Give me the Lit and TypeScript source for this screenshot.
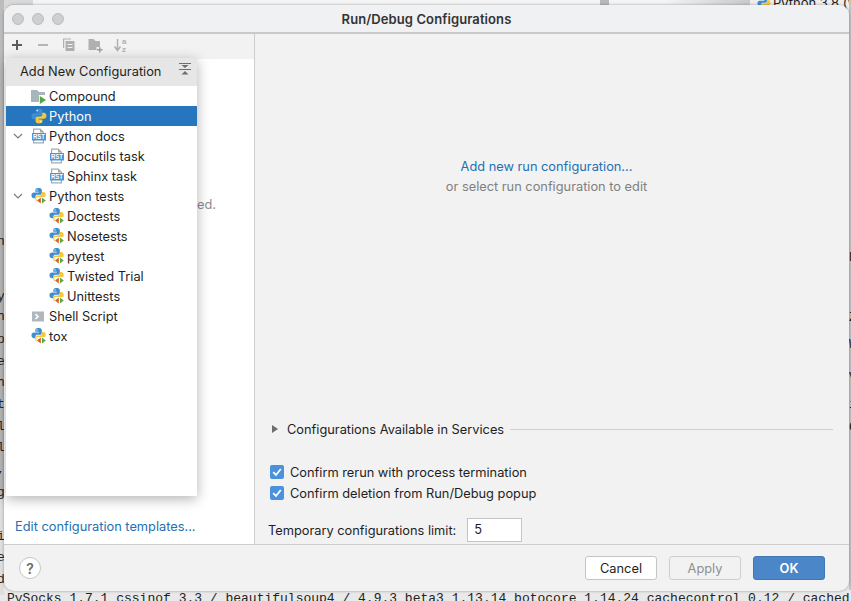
import { LitElement, css, html, svg } from 'lit';
import { customElement } from 'lit/decorators.js';

type Row = { label: string; icon: string; level: number; open?: boolean; selected?: boolean };

const rows: Row[] = [
  { label: 'Compound', icon: 'compound', level: 0 },
  { label: 'Python', icon: 'python', level: 0, selected: true },
  { label: 'Python docs', icon: 'rst', level: 0, open: true },
  { label: 'Docutils task', icon: 'rst', level: 1 },
  { label: 'Sphinx task', icon: 'rst', level: 1 },
  { label: 'Python tests', icon: 'tests', level: 0, open: true },
  { label: 'Doctests', icon: 'tests', level: 1 },
  { label: 'Nosetests', icon: 'tests', level: 1 },
  { label: 'pytest', icon: 'tests', level: 1 },
  { label: 'Twisted Trial', icon: 'tests', level: 1 },
  { label: 'Unittests', icon: 'tests', level: 1 },
  { label: 'Shell Script', icon: 'shell', level: 0 },
  { label: 'tox', icon: 'tests', level: 0 },
];

// letters of the terminal behind the dialog, cut off by its left edge
const leftChars: [string, number][] = [
  ['n', 242], ['y', 297], ['h', 317], ['p', 340], ['e', 362], ['h', 383], ['t', 405],
  ['l', 427], ['l', 448], [',', 470], ['g', 493], ['i', 537], ['e', 558], ['d', 580],
];
const rightChars: [string, number][] = [
  ['E', 258], ['Z', 318], ['W', 345], ['V', 378], ['i', 405], ['C', 428], ['-', 450], ['-', 472],
];

const half = 'M8 .5C5.2 .5 4.5 1.8 4.5 3V4.5H8.2V5.3H3.2C1.5 5.3 .5 6.4 .5 8.2 .5 10 1.5 11.3 3 11.3H4.7V9.4C4.7 8.2 5.6 7.6 6.6 7.6H9.4C10.6 7.6 11.4 6.8 11.4 5.7V3C11.4 1.6 10.4 .5 8 .5Z';
const snake = svg`
  <path fill="#3f8fd0" d=${half}/>
  <path fill="#f5c73d" d=${half} transform="rotate(180 8 8)"/>
  <circle cx="6.3" cy="2.5" r=".7" fill="#fff"/>
  <circle cx="9.7" cy="13.5" r=".7" fill="#fff"/>`;

function icon(name: string) {
  if (name === 'python') {
    return html`<svg width="16" height="16" viewBox="0 0 16 16">${snake}</svg>`;
  }
  if (name === 'tests') {
    return html`<svg width="16" height="16" viewBox="0 0 16 16">
      <g transform="translate(0 -.5) scale(.95)">${snake}</g>
      <path fill="#fff" d="M5.5 9h10v7.5h-10z"/>
      <path fill="#e0592a" d="M9.8 9.6V15.4L6 12.5Z"/>
      <path fill="#5fa83f" d="M11 9.6V15.4L14.8 12.5Z"/>
    </svg>`;
  }
  if (name === 'rst') {
    return html`<svg width="16" height="16" viewBox="0 0 16 16">
      <path fill="#a3abb0" d="M2 0.5H9.5L13 4V15.5H2Z"/>
      <path fill="#fff" d="M3.2 1.7H9V4.6H11.8V14.3H3.2Z"/>
      <rect x="1" y="5" width="14" height="7.5" fill="#4a97d6"/>
      <text x="2" y="11" textLength="12" lengthAdjust="spacingAndGlyphs" font-size="7" font-weight="700" font-family="Liberation Sans, sans-serif" fill="#fff">RST</text>
    </svg>`;
  }
  if (name === 'shell') {
    return html`<svg width="16" height="16" viewBox="0 0 16 16">
      <rect x="1" y="3.5" width="12" height="10" fill="#afb8bf"/>
      <path d="M4.5 6 7 8.5 4.5 11" fill="none" stroke="#fff" stroke-width="1.6"/>
    </svg>`;
  }
  return html`<svg width="16" height="16" viewBox="0 0 16 16">
    <path fill="#a9b4bb" d="M0 2H6L8 4H14V14H0Z"/>
    <path fill="#fff" d="M8 7H16V16H8Z"/>
    <path fill="#4fa83d" d="M8.8 8V16L15 12Z"/>
  </svg>`;
}

@customElement('app-root')
export class AppRoot extends LitElement {
  static styles = css`
    :host {
      display: block;
      position: relative;
      width: 851px;
      height: 601px;
      overflow: hidden;
      background: #e9e9e9;
      font-family: Inter, "Liberation Sans", sans-serif;
      font-size: 12.8px;
      color: #1e1e1e;
    }
    .strip {
      position: absolute;
      font-family: "Liberation Mono", monospace;
      font-size: 13px;
      line-height: 16px;
      color: #222;
      white-space: pre;
    }
    .top-a { left: 0; top: 0; width: 33px; height: 8px; background: #d9d9d9; }
    .top-b { left: 33px; top: 0; width: 567px; height: 8px; background: #f4f4f4; }
    .top-c { left: 600px; top: 0; width: 9px; height: 8px; background: #b9b9b9; }
    .top-d { left: 609px; top: 0; width: 141px; height: 8px; background: linear-gradient(90deg, #f4f4f4 40%, #c9c9c9); }
    .top-e {
      left: 750px; top: -4px; width: 101px; height: 14px;
      display: flex; gap: 2px; padding-left: 7px; box-sizing: border-box;
      background: #eee;
      font-family: Inter, sans-serif;
      font-size: 13px;
      line-height: 14px;
      overflow: hidden;
    }
    .top-e svg { flex: none; }
    .left {
      left: 0; top: 0; width: 4px; height: 595px; overflow: hidden;
      background: linear-gradient(#bcbcbc 497px, #dedede 497px);
    }
    .right { left: 849px; top: 0; width: 2px; height: 590px; background: #c2c2c2; overflow: hidden; }
    .char { position: absolute; line-height: 16px; }
    .left .char { left: -3px; }
    .right .char { left: 0; }
    .bottom { left: 7px; top: 591px; }

    .dialog {
      position: absolute;
      left: 4px;
      top: 5px;
      width: 845px;
      height: 586px;
      border-radius: 10px;
      overflow: hidden;
      background: #f2f2f2;
      box-shadow: 0 0 3px rgba(0, 0, 0, 0.35);
      display: flex;
      flex-direction: column;
    }
    .titlebar {
      height: 27px;
      flex: none;
      display: flex;
      align-items: center;
      justify-content: center;
      position: relative;
      background: #f0f1f3;
      border-bottom: 2px solid #c9c9c9;
      font-weight: 600;
      font-size: 13px;
      letter-spacing: 0.1px;
      color: #333;
    }
    .lights {
      position: absolute;
      left: 8px;
      top: 8px;
      display: flex;
      gap: 8px;
    }
    .lights i {
      display: block;
      width: 12px;
      height: 12px;
      box-sizing: border-box;
      border-radius: 50%;
      background: #cfcfcf;
      border: 1px solid #bcbcbc;
    }
    .main { flex: 1; display: flex; min-height: 0; }
    .side {
      width: 250px;
      flex: none;
      display: flex;
      flex-direction: column;
      border-right: 1px solid #cdcdcd;
    }
    .toolbar {
      height: 25px;
      flex: none;
      box-sizing: border-box;
      display: flex;
      align-items: center;
      gap: 10px;
      padding: 0 0 4px 5px;
    }
    .toolbar svg { display: block; }
    .list {
      flex: 1;
      background: #fff;
      display: flex;
      flex-direction: column;
      align-items: center;
      padding: 138px 3px 0 0;
      color: #8c8c8c;
    }
    .templates {
      height: 28px;
      flex: none;
      background: #fff;
      padding: 0 0 0 11px;
      color: #2470b3;
      line-height: 22px;
    }
    .content { flex: 1; display: flex; flex-direction: column; min-width: 0; }
    .hint {
      height: 385px;
      flex: none;
      display: flex;
      flex-direction: column;
      align-items: center;
      padding: 125px 11px 0 0;
      box-sizing: border-box;
      gap: 4px;
      line-height: 16px;
    }
    .link { color: #2470b3; }
    .muted { color: #808080; }
    .services {
      display: flex;
      align-items: center;
      height: 20px;
      padding: 0 16px 0 17px;
      gap: 6px;
    }
    .tri {
      width: 0;
      height: 0;
      margin-right: 3px;
      border-left: 6px solid #6e6e6e;
      border-top: 4.5px solid transparent;
      border-bottom: 4.5px solid transparent;
    }
    .services hr { flex: 1; margin: 0; border: 0; border-top: 1px solid #cfcfcf; }
    .checks { display: flex; flex-direction: column; gap: 5px; padding: 25px 0 0 15px; }
    .check { display: flex; align-items: center; gap: 6px; height: 16px; }
    .check svg { display: block; }
    .limit {
      display: flex;
      align-items: center;
      gap: 11px;
      padding: 17px 0 0 13px;
    }
    .limit .field {
      width: 55px;
      height: 24px;
      box-sizing: border-box;
      border: 1px solid #c4c4c4;
      background: #fff;
      padding-left: 6px;
      line-height: 22px;
    }
    .footer {
      height: 47px;
      flex: none;
      box-sizing: border-box;
      border-top: 1px solid #cdcdcd;
      display: flex;
      align-items: center;
      padding: 0 24px 0 15px;
      gap: 12px;
    }
    .help {
      width: 22px;
      height: 22px;
      box-sizing: border-box;
      border-radius: 50%;
      background: #fff;
      border: 1px solid #c6c6c6;
      display: flex;
      align-items: center;
      justify-content: center;
      font-weight: 600;
      font-size: 14px;
      color: #6d6d6d;
      margin-right: auto;
    }
    .btn {
      width: 72px;
      height: 24px;
      box-sizing: border-box;
      border-radius: 3px;
      border: 1px solid #c4c4c4;
      background: #fff;
      display: flex;
      align-items: center;
      justify-content: center;
    }
    .btn.off { background: #f2f2f2; border-color: #cfcfcf; color: #8f8f8f; }
    .btn.ok { background: #4b87c8; border-color: #3f78b5; color: #fff; font-weight: 600; }

    .popup {
      position: absolute;
      left: 6px;
      top: 58px;
      width: 191px;
      height: 438px;
      background: #fff;
      box-shadow: 0 3px 12px rgba(0, 0, 0, 0.3);
    }
    .popup header {
      height: 28px;
      box-sizing: border-box;
      background: #e6e6e6;
      display: flex;
      align-items: center;
      justify-content: space-between;
      padding: 0 5px 2px 14px;
    }
    .popup header svg { display: block; margin-bottom: 4px; }
    .row {
      position: relative;
      height: 20px;
      display: flex;
      align-items: center;
      box-sizing: border-box;
      gap: 2px;
      padding-left: 25px;
    }
    .row.child { padding-left: 43px; }
    .row svg { display: block; flex: none; }
    .row.selected { background: #2675bf; color: #fff; }
    .row .chevron { position: absolute; left: 7px; top: 7px; }
  `;

  protected render(): unknown {
    return html`
      <div class="strip top-a"></div>
      <div class="strip top-b"></div>
      <div class="strip top-c"></div>
      <div class="strip top-d"></div>
      <div class="strip top-e">
        <svg width="14" height="14" viewBox="0 0 16 16">${snake}</svg>
        <span>Python 3.8 (W</span>
      </div>
      <div class="strip left">
        ${leftChars.map(([c, y]) => html`<span class="char" style="top:${y - 8}px">${c}</span>`)}
      </div>
      <div class="strip right">
        ${rightChars.map(([c, y]) => html`<span class="char" style="top:${y - 8}px">${c}</span>`)}
      </div>
      <div class="strip bottom">PySocks 1.7.1 cssinof 3.3 / beautifulsoup4 / 4.9.3 beta3 1.13.14 botocore 1.14.24 cachecontrol 0.12 / cached</div>

      <div class="dialog">
        <div class="titlebar">
          <div class="lights"><i></i><i></i><i></i></div>
          Run/Debug Configurations
        </div>
        <div class="main">
          <div class="side">
            <div class="toolbar">
              <svg width="16" height="16" viewBox="0 0 16 16"><path d="M3 8H13M8 3V13" stroke="#5b5b5b" stroke-width="2"/></svg>
              <svg width="16" height="16" viewBox="0 0 16 16"><path d="M3 8H13" stroke="#b5b5b5" stroke-width="2"/></svg>
              <svg width="16" height="16" viewBox="0 0 16 16" fill="none"><path d="M2.6 11V2H10" stroke="#b0b0b0" stroke-width="1.2"/><path fill="#b0b0b0" d="M4.5 4H13.5V14H4.5Z"/><path d="M6.5 7.5H11.5M6.5 10.5H11.5" stroke="#f2f2f2" stroke-width="1.2"/></svg>
              <svg width="16" height="16" viewBox="0 0 16 16"><path fill="#b0b0b0" d="M1.5 2H6.5L8.5 4H13V10H9.5V13H1.5Z"/><path d="M10 12.8H15.5M12.8 10.2V15.5" stroke="#a0a0a0" stroke-width="1.5"/></svg>
              <svg width="16" height="16" viewBox="0 0 16 16"><path d="M4.5 2V13M1.5 9.5L4.5 13.5 7.5 9.5" fill="none" stroke="#b0b0b0" stroke-width="1.5"/><text x="9" y="6.5" font-size="8" font-weight="700" font-family="Liberation Sans, sans-serif" fill="#b0b0b0">a</text><text x="9" y="14.5" font-size="8" font-weight="700" font-family="Liberation Sans, sans-serif" fill="#b0b0b0">z</text></svg>
            </div>
            <div class="list"><span>No run configurations added.</span></div>
            <div class="templates">Edit configuration templates...</div>
          </div>
          <div class="content">
            <div class="hint">
              <span class="link">Add new run configuration...</span>
              <span class="muted">or select run configuration to edit</span>
            </div>
            <div class="services"><span class="tri"></span><span>Configurations Available in Services</span><hr /></div>
            <div class="checks">
              ${['Confirm rerun with process termination', 'Confirm deletion from Run/Debug popup'].map(
                (t) => html`<div class="check">
                  <svg width="14" height="14" viewBox="0 0 14 14"><rect width="14" height="14" rx="2" fill="#4b92dc"/><path d="M3.2 7.2 6 10 10.8 4" fill="none" stroke="#fff" stroke-width="1.8"/></svg>
                  <span>${t}</span>
                </div>`
              )}
            </div>
            <div class="limit"><span>Temporary configurations limit:</span><div class="field">5</div></div>
          </div>
        </div>
        <div class="footer">
          <div class="help">?</div>
          <div class="btn">Cancel</div>
          <div class="btn off">Apply</div>
          <div class="btn ok">OK</div>
        </div>
      </div>

      <div class="popup">
        <header>
          <span>Add New Configuration</span>
          <svg width="14" height="14" viewBox="0 0 14 14"><path fill="#6e6e6e" d="M1 1H13V2H1ZM3.5 3H10.5L7 6ZM1 7H13V8H1ZM7 9 10.5 12.5H3.5Z"/></svg>
        </header>
        <div class="tree">
          ${rows.map(
            (r) => html`<div class="row ${r.level ? 'child' : ''} ${r.selected ? 'selected' : ''}">
              ${r.open
                ? html`<svg class="chevron" width="10" height="7" viewBox="0 0 10 7"><path d="M1 1 5 5 9 1" fill="none" stroke="#7d7d7d" stroke-width="1.2"/></svg>`
                : ''}
              ${icon(r.icon)}
              <span>${r.label}</span>
            </div>`
          )}
        </div>
      </div>
    `;
  }
}
